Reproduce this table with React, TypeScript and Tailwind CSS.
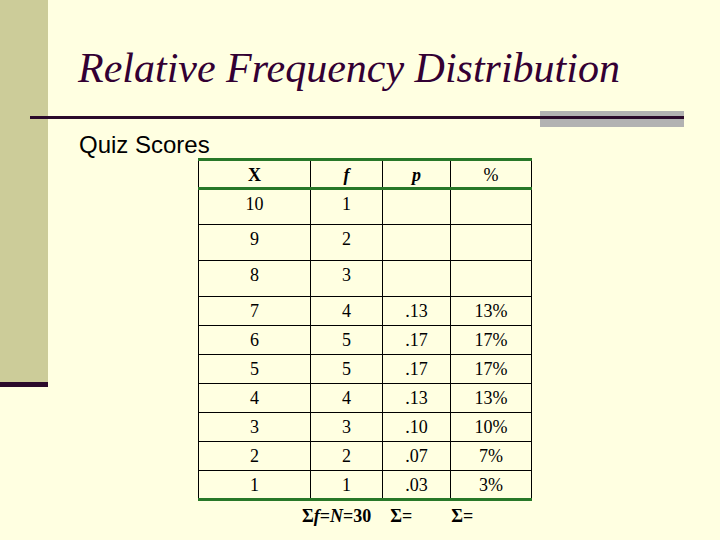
const rows: { x: string; f: string; p: string; pct: string }[] = [
  { x: "10", f: "1", p: "", pct: "" },
  { x: "9", f: "2", p: "", pct: "" },
  { x: "8", f: "3", p: "", pct: "" },
  { x: "7", f: "4", p: ".13", pct: "13%" },
  { x: "6", f: "5", p: ".17", pct: "17%" },
  { x: "5", f: "5", p: ".17", pct: "17%" },
  { x: "4", f: "4", p: ".13", pct: "13%" },
  { x: "3", f: "3", p: ".10", pct: "10%" },
  { x: "2", f: "2", p: ".07", pct: "7%" },
  { x: "1", f: "1", p: ".03", pct: "3%" },
];

const serif = "font-['Liberation_Serif','Times_New_Roman',serif]";

export default function App() {
  return (
    <div className="flex h-[540px] w-[720px] overflow-hidden bg-[#FFFFE1]">
      {/* Left band */}
      <div className="flex w-[48px] shrink-0 flex-col">
        <div className="h-[382px] bg-[#CCCC99]" />
        <div className="h-[5px] bg-[#2B0A2B]" />
      </div>

      <div className="flex flex-1 flex-col">
        <h1
          className={`${serif} pl-[30px] pt-[47px] text-[42px] italic leading-[42px] text-[#330033]`}
        >
          Relative Frequency Distribution
        </h1>

        {/* Rule with grey tab */}
        <div className="relative z-10 ml-[-18px] mt-[22px] flex w-[654px]">
          <div className="flex-1 pt-[5px]">
            <div className="h-[3px] bg-[#2B0A2B]" />
          </div>
          <div className="h-[16px] w-[144px] bg-[#B2B2B2] pt-[5px]">
            <div className="h-[3px] bg-[#2B0A2B]" />
          </div>
        </div>

        <div className="mt-[4px] pl-[31px] font-['Liberation_Sans',Arial,sans-serif] text-[24px] leading-[27px] text-black">
          Quiz Scores
        </div>

        <table
          className={`${serif} ml-[150px] w-[333px] table-fixed border-collapse text-[18px] text-black`}
        >
          <colgroup>
            <col className="w-[112px]" />
            <col className="w-[72px]" />
            <col className="w-[68px]" />
            <col className="w-[81px]" />
          </colgroup>
          <thead>
            <tr className="h-[29px] border-t-[3px] border-b-[3px] border-t-[#287828] border-b-[#287828]">
              <th className="border-x border-black pt-[2px] text-center align-middle font-bold leading-[20px]">X</th>
              <th className="border-x border-black pt-[2px] text-center align-middle font-bold italic leading-[20px]">f</th>
              <th className="border-x border-black pt-[2px] text-center align-middle font-bold italic leading-[20px]">p</th>
              <th className="border-x border-black pt-[2px] text-center align-middle font-normal leading-[20px]">%</th>
            </tr>
          </thead>
          <tbody className="border-b-[3px] border-b-[#287828]">
            {rows.map((r, i) => (
              <tr key={i} className={i < 3 ? "h-[36px]" : "h-[29px]"}>
                {[r.x, r.f, r.p, r.pct].map((v, j) => (
                  <td
                    key={j}
                    className="border border-black p-0 pt-[4px] text-center align-top leading-[20px]"
                  >
                    {v}
                  </td>
                ))}
              </tr>
            ))}
          </tbody>
        </table>

        <div className={`${serif} mt-[4px] flex text-[18px] font-bold leading-[22px] text-black`}>
          <span className="ml-[254px]">
            Σ<i>f</i>=<i>N</i>=30
          </span>
          <span className="ml-[19px]">Σ=</span>
          <span className="ml-[39px]">Σ=</span>
        </div>
      </div>
    </div>
  );
}
